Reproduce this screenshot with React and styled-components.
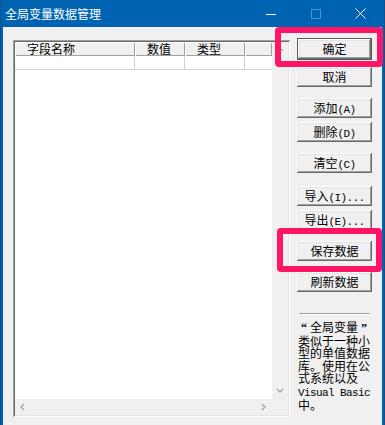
import React from "react";
import styled, { createGlobalStyle } from "styled-components";

const Global = createGlobalStyle`
  html, body { margin: 0; padding: 0; background: #0063b1; }
  body {
    width: 385px; height: 425px; overflow: hidden;
    font-family: "Noto Sans CJK SC", "Noto Sans", sans-serif;
  }
`;

const Window = styled.div`
  position: relative;
  width: 385px;
  height: 425px;
  background: #0063b1;
  box-shadow: inset 1px 0 0 #1a4f86, inset -1px 0 0 #1a4f86;
  display: flex;
  flex-direction: column;
  overflow: hidden;
`;

const TitleBar = styled.div`
  height: 27px;
  flex-shrink: 0;
  display: flex;
  align-items: stretch;
  color: #fff;
`;

const Title = styled.div`
  flex: 1;
  padding-left: 5px;
  font-size: 12px;
  line-height: 28px;
  white-space: nowrap;
`;

const CaptionButton = styled.div`
  width: 45px;
  display: flex;
  align-items: center;
  justify-content: center;
  margin-right: ${(p) => (p.$last ? "2px" : "0")};
`;

const Body = styled.div`
  flex: 1;
  margin: 0 3px;
  background: #f0f0f0;
  display: flex;
  align-items: flex-start;
`;

const ListBox = styled.div`
  margin: 13px 0 0 10px;
  width: 277px;
  height: 377px;
  box-sizing: border-box;
  padding: 2px;
  background: #f0f0f0;
  box-shadow: inset 1px 1px 0 #a0a0a0, inset -1px -1px 0 #ffffff,
    inset 2px 2px 0 #696969, inset -2px -2px 0 #e3e3e3;
  display: grid;
  grid-template-columns: 1fr 16px;
  grid-template-rows: 1fr 16px;
`;

const ListArea = styled.div`
  background: #fff;
  overflow: hidden;
`;

const HeaderRow = styled.div`
  display: flex;
  height: 14px;
  background: #f0f0f0;
`;

const HeaderCell = styled.div`
  box-sizing: border-box;
  width: ${(p) => (p.$w ? `${p.$w}px` : "auto")};
  flex: ${(p) => (p.$w ? "0 0 auto" : "1")};
  padding-left: 12px;
  font-size: 12px;
  line-height: 14px;
  color: #000;
  white-space: nowrap;
  box-shadow: inset 1px 1px 0 #ffffff, inset -1px -1px 0 #a0a0a0;
`;

const DataRow = styled.div`
  display: flex;
  height: 13px;
  border-bottom: 1px solid #d0d0d0;
`;

const DataCell = styled.div`
  box-sizing: border-box;
  width: ${(p) => (p.$w ? `${p.$w}px` : "auto")};
  flex: ${(p) => (p.$w ? "0 0 auto" : "1")};
  border-right: ${(p) => (p.$w ? "1px solid #d0d0d0" : "none")};
`;

const VScroll = styled.div`
  display: flex;
  flex-direction: column;
  justify-content: space-between;
`;

const HScroll = styled.div`
  display: flex;
  justify-content: space-between;
`;

const ArrowBox = styled.div`
  width: 16px;
  height: 16px;
  display: flex;
  align-items: center;
  justify-content: center;
`;

const Corner = styled.div``;

const Panel = styled.div`
  margin: 11px 0 0 7px;
  width: 75px;
  display: flex;
  flex-direction: column;
`;

const Button = styled.div`
  box-sizing: border-box;
  width: 75px;
  height: ${(p) => (p.$default ? "22px" : "20px")};
  margin-top: ${(p) => p.$mt || 0}px;
  background: #f0f0f0;
  border: ${(p) => (p.$default ? "1px solid #5a5a5a" : "none")};
  box-shadow: inset -1px -1px 0 #696969, inset 1px 1px 0 #ffffff,
    inset -2px -2px 0 #a0a0a0, inset 2px 2px 0 #e3e3e3;
  font-size: 12px;
  line-height: 20px;
  text-align: center;
  color: #000;
  white-space: nowrap;
`;

const Latin = styled.span`
  font-family: "Liberation Mono", monospace;
  font-size: 11px;
  letter-spacing: -0.6px;
`;

const Separator = styled.div`
  margin: 21px 0 0 2px;
  width: 71px;
  height: 0;
  border-top: 1px solid #a0a0a0;
  border-bottom: 1px solid #ffffff;
`;

const Desc = styled.div`
  margin: 6px 0 0 1px;
  width: 74px;
  font-size: 12px;
  line-height: 12.5px;
  color: #000;
  white-space: nowrap;
`;

const Quote = styled.span`
  display: inline-block;
  width: 12px;
  text-align: center;
  font-family: "Liberation Serif", serif;
  font-weight: bold;
`;

const Highlight = styled.div`
  position: absolute;
  left: ${(p) => p.$x}px;
  top: ${(p) => p.$y}px;
  width: ${(p) => p.$w}px;
  height: ${(p) => p.$h}px;
  box-sizing: border-box;
  border: 6px solid #ff1466;
  border-radius: 4px;
  pointer-events: none;
`;

const Chevron = ({ dir }) => {
  const pts = {
    up: "1,5 4,2 7,5",
    down: "1,2 4,5 7,2",
    left: "5,1 2,4 5,7",
    right: "2,1 5,4 2,7",
  }[dir];
  return (
    <svg width="8" height="8" viewBox="0 0 8 8">
      <polyline points={pts} fill="none" stroke="#a6a6a6" strokeWidth="1.4" />
    </svg>
  );
};

export default function App() {
  const cols = [
    { w: 120, t: "字段名称" },
    { w: 50, t: "数值" },
    { w: 60, t: "类型" },
    { w: 0, t: "" },
  ];
  return (
    <>
      <Global />
      <Window>
        <TitleBar>
          <Title>全局变量数据管理</Title>
          <CaptionButton>
            <svg width="10" height="10" viewBox="0 0 10 10">
              <line x1="0" y1="5.5" x2="10" y2="5.5" stroke="#fff" strokeWidth="1" />
            </svg>
          </CaptionButton>
          <CaptionButton>
            <svg width="10" height="10" viewBox="0 0 10 10">
              <rect x="0.5" y="0.5" width="9" height="9" fill="none" stroke="rgba(255,255,255,0.3)" strokeWidth="1" />
            </svg>
          </CaptionButton>
          <CaptionButton $last>
            <svg width="11" height="11" viewBox="0 0 11 11">
              <line x1="0.5" y1="0.5" x2="10.5" y2="10.5" stroke="#fff" strokeWidth="1" />
              <line x1="10.5" y1="0.5" x2="0.5" y2="10.5" stroke="#fff" strokeWidth="1" />
            </svg>
          </CaptionButton>
        </TitleBar>
        <Body>
          <ListBox>
            <ListArea>
              <HeaderRow>
                {cols.map((c, i) => (
                  <HeaderCell key={i} $w={c.w}>
                    {c.t}
                  </HeaderCell>
                ))}
              </HeaderRow>
              <DataRow>
                {cols.map((c, i) => (
                  <DataCell key={i} $w={c.w} />
                ))}
              </DataRow>
            </ListArea>
            <VScroll>
              <ArrowBox>
                <Chevron dir="up" />
              </ArrowBox>
              <ArrowBox>
                <Chevron dir="down" />
              </ArrowBox>
            </VScroll>
            <HScroll>
              <ArrowBox>
                <Chevron dir="left" />
              </ArrowBox>
              <ArrowBox>
                <Chevron dir="right" />
              </ArrowBox>
            </HScroll>
            <Corner />
          </ListBox>
          <Panel>
            <Button $default>确定</Button>
            <Button $mt={7}>取消</Button>
            <Button $mt={11}>
              添加<Latin>(A)</Latin>
            </Button>
            <Button $mt={4}>
              删除<Latin>(D)</Latin>
            </Button>
            <Button $mt={11}>
              清空<Latin>(C)</Latin>
            </Button>
            <Button $mt={13}>
              导入<Latin>(I)...</Latin>
            </Button>
            <Button $mt={4}>
              导出<Latin>(E)...</Latin>
            </Button>
            <Button $mt={11}>保存数据</Button>
            <Button $mt={11}>刷新数据</Button>
            <Separator />
            <Desc>
              <Quote>“</Quote>全局变量<Quote>”</Quote>
              <br />
              类似于一种小
              <br />
              型的单值数据
              <br />
              库。使用在公
              <br />
              式系统以及
              <br />
              <Latin>Visual Basic</Latin>
              <br />
              中。
            </Desc>
          </Panel>
        </Body>
        <Highlight $x={275} $y={27} $w={108} $h={40} />
        <Highlight $x={277} $y={228} $w={105} $h={44} />
      </Window>
    </>
  );
}
